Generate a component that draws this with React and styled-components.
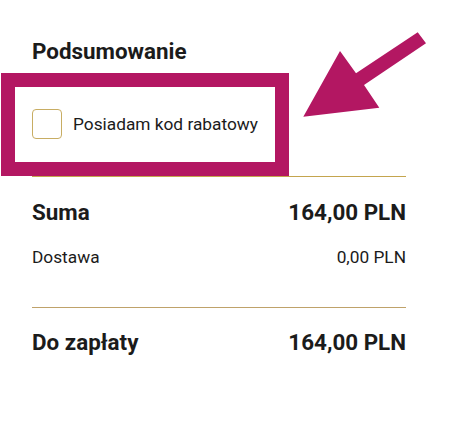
import styled, { createGlobalStyle } from 'styled-components'

const GlobalStyle = createGlobalStyle`
    body {
        margin: 0;
        background: #ffffff;
        font-family: Roboto, "Liberation Sans", sans-serif;
        color: #1b1b1b;
    }
`;

const App = () => {
    return (
        <Page>
            <GlobalStyle />
            <Summary>
                <Title>Podsumowanie</Title>
                <Coupon>
                    <Checkbox type="button" aria-label="Posiadam kod rabatowy" />
                    <CouponLabel>Posiadam kod rabatowy</CouponLabel>
                </Coupon>
                <Totals>
                    <Row big>
                        <span>Suma</span>
                        <span>164,00 PLN</span>
                    </Row>
                    <Row>
                        <span>Dostawa</span>
                        <span>0,00 PLN</span>
                    </Row>
                </Totals>
                <Row big>
                    <span>Do zapłaty</span>
                    <span>164,00 PLN</span>
                </Row>
            </Summary>

            {/* annotation over the screenshot */}
            <Highlight />
            <Arrow width="455" height="130" viewBox="0 0 455 130">
                <polygon
                    points="417.7,32.3 426,43.3 364,85 379.3,107.7 303.3,116.7 340,51 356,73.3"
                    fill="#b31762"
                />
            </Arrow>
        </Page>
    )
}

const Page = styled.div`
    position: relative;
    width: 455px;
    height: 438px;
    overflow: hidden;
`;

const Summary = styled.div`
    width: 374px;
    padding: 38px 0 0 32px;
`;

const Title = styled.h2`
    margin: 0;
    font-size: 22.4px;
    line-height: 26px;
    font-weight: 700;
`;

const Coupon = styled.div`
    display: flex;
    align-items: center;
    gap: 11px;
    margin-top: 45px;
    padding-bottom: 37px;
    border-bottom: 1px solid #c4a54e;
`;

const Checkbox = styled.button`
    width: 30px;
    height: 30px;
    padding: 0;
    border: 1px solid #c8ad63;
    border-radius: 4px;
    background: #ffffff;
    cursor: pointer;
`;

const CouponLabel = styled.span`
    font-size: 17.3px;
    line-height: 20px;
`;

const Totals = styled.div`
    display: flex;
    flex-direction: column;
    gap: 22px;
    padding: 22px 0 40px;
    margin-bottom: 21px;
    border-bottom: 1px solid #bfa26a;
`;

const Row = styled.div`
    display: flex;
    justify-content: space-between;
    font-size: ${props => props.big ? '22.4px' : '17.3px'};
    line-height: ${props => props.big ? '26px' : '20px'};
    font-weight: ${props => props.big ? 700 : 400};
`;

const Highlight = styled.div`
    position: absolute;
    left: 1px;
    top: 73px;
    width: 260px;
    height: 75px;
    border: 14px solid #b31762;
`;

const Arrow = styled.svg`
    position: absolute;
    left: 0;
    top: 0;
`;

export default App;
